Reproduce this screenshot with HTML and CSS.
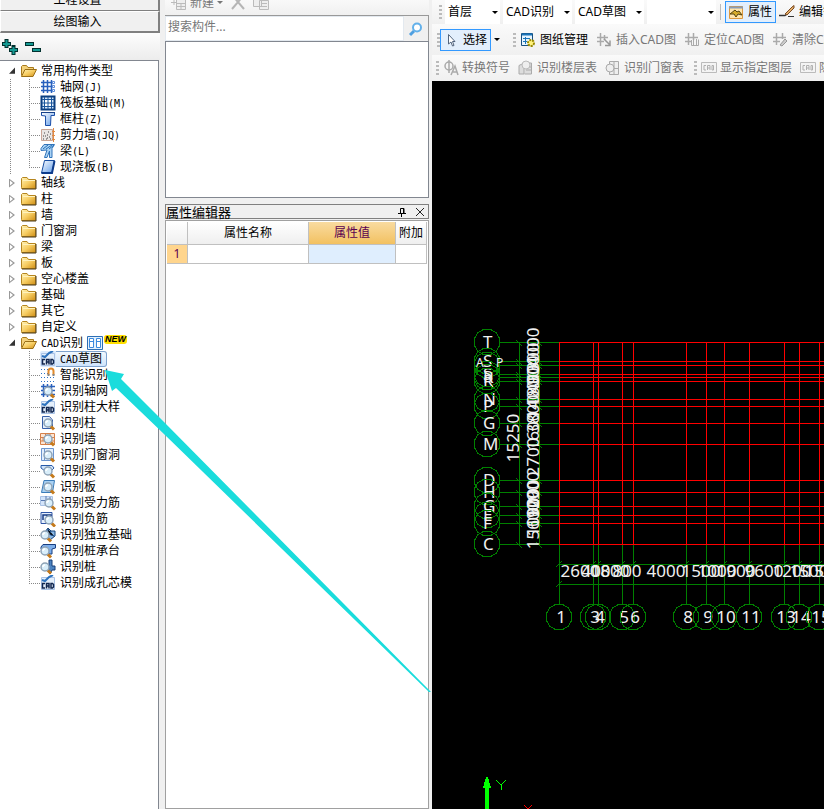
FILE: index.html
```html
<!DOCTYPE html>
<html lang="zh-CN">
<head>
  <meta charset="UTF-8">
  <meta name="viewport" content="width=device-width, initial-scale=1">
  <title>CAD草图</title>
  <link rel="stylesheet" href="styles.css">
</head>
<body>

<!-- Icon sprites -->
<svg class="sprites" aria-hidden="true">
  <defs>
    <linearGradient id="gold" x1="0" y1="0" x2="1" y2="1">
      <stop offset="0" stop-color="#fff3b8"/><stop offset=".5" stop-color="#f7cd62"/><stop offset="1" stop-color="#cf8e16"/>
    </linearGradient>
    <linearGradient id="blue" x1="0" y1="0" x2="1" y2="1">
      <stop offset="0" stop-color="#fff"/><stop offset="1" stop-color="#5f9be8"/>
    </linearGradient>
  </defs>
  <symbol id="folder" viewBox="0 0 16 16">
    <path d="M.5 12.500V3.500L1.500 2.500H6L7.500 4.500H14.500V13.500H.5Z" fill="url(#gold)" stroke="#b5851f"/>
    <path d="M1 14H15V5" fill="none" stroke="#4a3816"/>
    <path d="M2 5.500H14" stroke="#fff2bd"/>
  </symbol>
  <symbol id="folder-open" viewBox="0 0 16 16">
    <path d="M.5 12.500V3.500L1.500 2.500H5.500L7 4.500H12.500V7" fill="#f4d27b" stroke="#a87a1c"/>
    <path d="M.5 13.500L4 6.500H15.500L12 13.500Z" fill="url(#gold)" stroke="#9b6f16"/>
  </symbol>
  <symbol id="lens" viewBox="0 0 16 16">
    <path d="M10.500 11L14 14.500" stroke="#c57a1b" stroke-width="3"/>
    <circle cx="8" cy="8" r="4" fill="#d9eefa" stroke="#8fa3b6" stroke-width="1.500"/>
    <path d="M6 8Q6 6 8 6" fill="none" stroke="#fff" stroke-width="1.500"/>
  </symbol>
  <symbol id="axis" viewBox="0 0 16 16">
    <path d="M3.500 1V14M7.500 1V14M11.500 1V14M1 3.500H14M1 7.500H14M1 11.500H14" stroke="#2860bd" stroke-width="1.500"/>
    <path d="M12.500 2.500h2v2h-2zM12.500 6.500h2v2h-2zM12.500 10.500h2v2h-2z" fill="#fff" stroke="#5d8ddb"/>
  </symbol>
  <symbol id="raft" viewBox="0 0 16 16">
    <path d="M1.500 1.500h13v13h-13z" fill="#d7e8fa" stroke="#0c3f80" stroke-width="2"/>
    <path d="M4.500 4.500h7v7h-7z" fill="#fff" stroke="#1b569c"/>
    <path d="M8 2V14M2 8H14M4.500 2V5M11.500 2V5M4.500 11V14M11.500 11V14M2 4.500H5M2 11.500H5M11 4.500H14M11 11.500H14" fill="none" stroke="#1b569c"/>
  </symbol>
  <symbol id="column" viewBox="0 0 16 16">
    <path d="M1.500 1.500H14.500V4.500H11L10.500 14.500H5.500V5L1.500 4.500Z" fill="url(#blue)" stroke="#1c4fa8"/>
    <path d="M1 1.500H15" stroke="#174187"/>
  </symbol>
  <symbol id="shear" viewBox="0 0 16 16">
    <path d="M1.500 2.500h11v11h-11z" fill="#e9e6e4" stroke="#c9a596"/>
    <path d="M3 12h1M5 9h1M4 6h1M8 5h1M7 8h1M9 10h1M6 12h1M10 7h1M10 12h1M3 9h1M7 11h1" stroke="#444"/>
    <path d="M13.500 1V15M12 4.500H15M12 8.500H15M12 12.500H15" stroke="#e28b43"/>
  </symbol>
  <symbol id="beam" viewBox="0 0 16 16">
    <path d="M1 5.500L4 1.500H14.500L12 5.500V14.500H9.500V8L7 14.500H4.500L7 7L1 7.500Z" fill="#a9d2f4" stroke="#3275bb"/>
    <path d="M3 6L8 2M6 6L12 2M9 6L14 2" stroke="#246fb8"/>
  </symbol>
  <symbol id="slab" viewBox="0 0 16 16">
    <path d="M4.500 1.500H14.500L12 14H1.500Z" fill="url(#blue)" stroke="#164ca0"/>
    <path d="M1.500 14H12L14.500 2" fill="none" stroke="#0d3c8c" stroke-width="2"/>
  </symbol>
  <symbol id="cad" viewBox="0 0 16 16">
    <path d="M1.500 2.500h13v12h-13z" fill="#e4effb" stroke="#a9c2e6"/>
    <path d="M2 5L5 6L9 2L13 0" fill="none" stroke="#2d72bd" stroke-width="2"/>
    <path d="M5 8.500H2.500V13H5M6.500 13.500V8.500H9V13.500M6.500 11H9M11 8.500H12.500L13.500 9.500V12L12.500 13H11Z" fill="none" stroke="#10264f" stroke-width="1.500"/>
  </symbol>
  <symbol id="smart" viewBox="0 0 16 16">
    <path d="M1 2.500H8M1 6.500H8M1 10.500H14M1 14.500H14" stroke="#2c73c9" stroke-dasharray="1 2"/>
    <path d="M8.500 8V4Q8.500 1.500 11 1.500T13.500 4V8" fill="none" stroke="#e08a2c" stroke-width="2"/>
    <path d="M7.500 8h2M12.500 8h2" stroke="#888" stroke-width="2"/>
  </symbol>
  <symbol id="r-axis" viewBox="0 0 16 16">
    <path d="M3.500 1V14M7.500 1V14M11.500 1V14M1 3.500H15M1 7.500H15M1 11.500H15" stroke="#2860bd" stroke-width="1.500"/>
    <use href="#lens"/>
  </symbol>
  <symbol id="r-column" viewBox="0 0 16 16">
    <path d="M2.500 1.500H9.500L12.500 5V13.500H2.500Z" fill="#e5effc" stroke="#3860a8"/><use href="#lens"/>
  </symbol>
  <symbol id="r-wall" viewBox="0 0 16 16">
    <path d="M.5 2.500h14v11H.5zM1 6.500H14M1 10H14M5.500 3V6M10 3V6M3 7V10M5.500 10V13" fill="#fce4d2" stroke="#d4814b"/><use href="#lens"/>
  </symbol>
  <symbol id="r-door" viewBox="0 0 16 16">
    <path d="M1.500 1.500h12v12h-12z" fill="#e2effd" stroke="#6c95ce"/><path d="M4.500 2V13" stroke="#6c95ce"/><use href="#lens"/>
  </symbol>
  <symbol id="r-beam" viewBox="0 0 16 16">
    <path d="M1 2.500H12L14 5L11 8H5L1 5Z" fill="#d0e4fb" stroke="#295ba8"/><use href="#lens"/>
  </symbol>
  <symbol id="r-slab" viewBox="0 0 16 16">
    <path d="M4 1.500H14.500L12.500 13.500H1.500Z" fill="#a9d1f3" stroke="#3b7cb9"/><use href="#lens"/>
  </symbol>
  <symbol id="r-bar" viewBox="0 0 16 16">
    <path d="M.5 1.500h12v9H.5z" fill="#d3e4fa" stroke="#a9c2e6"/><path d="M1 5.500H13M6 1V9M10 2V6" stroke="#5778b0"/><use href="#lens" x="1"/>
  </symbol>
  <symbol id="r-neg" viewBox="0 0 16 16">
    <path d="M1 1.500h11v11h-11z" fill="#e6f0fe" stroke="#2c54a5"/><path d="M3 9V4H11V8M7 4V8" fill="none" stroke="#173b85" stroke-width="1.500"/><use href="#lens" x="1" y="1"/>
  </symbol>
  <symbol id="r-base" viewBox="0 0 16 16">
    <path d="M5 5L8 1L11 4L15 4V9L10 13L3 10Z" fill="#8cb9e6" stroke="#174680"/><path d="M8 2V7L14 9M11 4L9 8" stroke="#174680"/><use href="#lens" x="-3"/>
  </symbol>
  <symbol id="r-cap" viewBox="0 0 16 16">
    <path d="M1 4L3 1.500H15.500V5L12 6V11H7V6H1Z" fill="#7daeea" stroke="#183e80"/><use href="#lens" x="-3"/>
  </symbol>
  <symbol id="r-pile" viewBox="0 0 16 16">
    <path d="M9 1H12V7H15V11H12L10 15L7 10V7H9Z" fill="#4c83c1" stroke="#173f78"/><use href="#lens" x="-3"/>
  </symbol>
  <symbol id="hash" viewBox="0 0 16 16">
    <path d="M1 5.500H12M1 9.500H8M4.500 1V14M8.500 3V8" stroke="#aaa" stroke-width="1.500"/>
    <path d="M8 7L14 13M14 8.500V13.500H9" fill="none" stroke="#999" stroke-width="1.500"/>
  </symbol>
  <symbol id="cad-gray" viewBox="0 0 16 16">
    <path d="M.5 2.500h15v10H.5z" fill="#f4f4f4" stroke="#bbb"/>
    <path d="M5 5.500H3V10H5M6.500 10V5.500H9V10M6.500 8H9M11 5.500H12.500V10H11Z" fill="none" stroke="#b0b0b0"/>
  </symbol>
</svg>

<div class="app">

  <!-- 左侧导航 -->
  <aside class="sidebar">
    <button class="stack-btn">工程设置</button>
    <button class="stack-btn">绘图输入</button>
    <div class="tree-tools">
      <button class="plain-btn" aria-label="展开">
        <svg width="18" height="16"><path d="M2 5H11M6.500 0V9M9 11H18M13.500 6V16" stroke="#02302e" stroke-width="4"/><path d="M3 5H10M6.500 1V8M10 11H17M13.500 8V15" stroke="#149a93" stroke-width="2"/></svg>
      </button>
      <button class="plain-btn" aria-label="折叠">
        <svg width="18" height="16"><path d="M1 5H10M8 11H17" stroke="#02302e" stroke-width="4"/><path d="M2 5H9M9 11H16" stroke="#149a93" stroke-width="2"/></svg>
      </button>
    </div>

    <ul class="tree">
      <li class="branch">
        <div class="node"><i class="toggle open"></i><svg class="ico"><use href="#folder-open"/></svg>常用构件类型</div>
        <ul class="sub">
          <li><svg class="ico"><use href="#axis"/></svg><span class="name">轴网<span class="key">(J)</span></span></li>
          <li><svg class="ico"><use href="#raft"/></svg><span class="name">筏板基础<span class="key">(M)</span></span></li>
          <li><svg class="ico"><use href="#column"/></svg><span class="name">框柱<span class="key">(Z)</span></span></li>
          <li><svg class="ico"><use href="#shear"/></svg><span class="name">剪力墙<span class="key">(JQ)</span></span></li>
          <li><svg class="ico"><use href="#beam"/></svg><span class="name">梁<span class="key">(L)</span></span></li>
          <li><svg class="ico"><use href="#slab"/></svg><span class="name">现浇板<span class="key">(B)</span></span></li>
        </ul>
      </li>
      <li><div class="node"><i class="toggle"></i><svg class="ico"><use href="#folder"/></svg>轴线</div></li>
      <li><div class="node"><i class="toggle"></i><svg class="ico"><use href="#folder"/></svg>柱</div></li>
      <li><div class="node"><i class="toggle"></i><svg class="ico"><use href="#folder"/></svg>墙</div></li>
      <li><div class="node"><i class="toggle"></i><svg class="ico"><use href="#folder"/></svg>门窗洞</div></li>
      <li><div class="node"><i class="toggle"></i><svg class="ico"><use href="#folder"/></svg>梁</div></li>
      <li><div class="node"><i class="toggle"></i><svg class="ico"><use href="#folder"/></svg>板</div></li>
      <li><div class="node"><i class="toggle"></i><svg class="ico"><use href="#folder"/></svg>空心楼盖</div></li>
      <li><div class="node"><i class="toggle"></i><svg class="ico"><use href="#folder"/></svg>基础</div></li>
      <li><div class="node"><i class="toggle"></i><svg class="ico"><use href="#folder"/></svg>其它</div></li>
      <li><div class="node"><i class="toggle"></i><svg class="ico"><use href="#folder"/></svg>自定义</div></li>
      <li>
        <div class="node"><i class="toggle open"></i><svg class="ico"><use href="#folder-open"/></svg><span><span class="key">CAD</span>识别</span>
          <svg class="ico" viewBox="0 0 16 16"><path d="M.5 1.500h15v13H.5z" fill="#e4f1fd" stroke="#2d6fb5"/><path d="M2.500 3.500h4v9h-4zM9.500 3.500h4v9h-4zM2 6.500h5M9 6.500h5" fill="#fff" stroke="#3b8ade"/></svg>
          <b class="new">NEW</b>
        </div>
        <ul class="sub">
          <li class="active"><svg class="ico"><use href="#cad"/></svg><span class="name"><span class="key">CAD</span>草图</span></li>
          <li><svg class="ico"><use href="#smart"/></svg><span class="name">智能识别</span></li>
          <li><svg class="ico"><use href="#r-axis"/></svg><span class="name">识别轴网</span></li>
          <li><svg class="ico"><use href="#cad"/></svg><span class="name">识别柱大样</span></li>
          <li><svg class="ico"><use href="#r-column"/></svg><span class="name">识别柱</span></li>
          <li><svg class="ico"><use href="#r-wall"/></svg><span class="name">识别墙</span></li>
          <li><svg class="ico"><use href="#r-door"/></svg><span class="name">识别门窗洞</span></li>
          <li><svg class="ico"><use href="#r-beam"/></svg><span class="name">识别梁</span></li>
          <li><svg class="ico"><use href="#r-slab"/></svg><span class="name">识别板</span></li>
          <li><svg class="ico"><use href="#r-bar"/></svg><span class="name">识别受力筋</span></li>
          <li><svg class="ico"><use href="#r-neg"/></svg><span class="name">识别负筋</span></li>
          <li><svg class="ico"><use href="#r-base"/></svg><span class="name">识别独立基础</span></li>
          <li><svg class="ico"><use href="#r-cap"/></svg><span class="name">识别桩承台</span></li>
          <li><svg class="ico"><use href="#r-pile"/></svg><span class="name">识别桩</span></li>
          <li><svg class="ico"><use href="#cad"/></svg><span class="name">识别成孔芯模</span></li>
        </ul>
      </li>
    </ul>
  </aside>

  <!-- 构件列表 + 属性编辑器 -->
  <section class="middle">
    <div class="list-tools">
      <button class="plain-btn list-new">
        <svg width="16" height="16"><path d="M5.500 4.500h9v10h-9zM5 8.500h10M5 11.500h10M10 8V14" fill="#eee" stroke="#bbb"/><path d="M0 7.500H6M3 5V10" stroke="#bbb"/></svg>
        新建<i class="caret gray"></i>
      </button>
      <button class="plain-btn" aria-label="删除"><svg width="16" height="16"><path d="M2 14L8 7L14 14M8 7L3 1M8 7L13 1" fill="none" stroke="#b5b5b5" stroke-width="2"/></svg></button>
      <button class="plain-btn" aria-label="复制"><svg width="16" height="16"><path d="M.5 2.500h8v9h-8zM6.500 5.500h9v9h-9zM8 8.500h6M8 11.500h6" fill="#eee" stroke="#bbb"/></svg></button>
    </div>
    <div class="search">
      <input type="text" placeholder="搜索构件..." aria-label="搜索构件">
      <button class="plain-btn" aria-label="搜索"><svg width="16" height="16"><path d="M2 14L6 10" stroke="#4e9fe0" stroke-width="3"/><circle cx="9" cy="6.500" r="4" fill="#fff" stroke="#62b0ea" stroke-width="2"/></svg></button>
    </div>
    <div class="list-box"></div>

    <div class="panel-title">
      <h2>属性编辑器</h2>
      <button class="plain-btn" aria-label="固定"><svg width="10" height="10"><path d="M3.500 6V1.500H7V6M6.500 1V6M1 6.500H9M4.500 6V10" fill="none" stroke="#000"/></svg></button>
      <button class="plain-btn" aria-label="关闭"><svg width="10" height="10"><path d="M1 1L9 9M9 1L1 9" stroke="#222"/></svg></button>
    </div>
    <div class="props">
      <table>
        <colgroup><col class="c-num"><col><col class="c-val"><col class="c-add"></colgroup>
        <thead>
          <tr><th></th><th>属性名称</th><th class="hot">属性值</th><th>附加</th></tr>
        </thead>
        <tbody>
          <tr><th class="num">1</th><td></td><td class="current"></td><td></td></tr>
        </tbody>
      </table>
    </div>
  </section>

  <!-- 绘图区 -->
  <main class="work">
    <div class="bar bar-top">
      <i class="grip"></i>
      <div class="combo floor"><select aria-label="楼层"><option>首层</option></select></div>
      <div class="combo"><select aria-label="类型"><option>CAD识别</option></select></div>
      <div class="combo"><select aria-label="构件"><option>CAD草图</option></select></div>
      <div class="combo"><select aria-label="名称"><option></option></select></div>
      <i class="sep"></i>
      <button class="tool on"><svg class="ico" viewBox="0 0 16 16"><path d="M1.500 2.500h13v12h-13z" fill="#ffe5ad" stroke="#dc983d"/><path d="M1 3.500H15" stroke="#8a9cb4" stroke-width="2"/><path d="M2 10L7 6L9 8L11 7L14 11L10 10L8 13L6 10Z" fill="#d7ac2b" stroke="#54430d"/></svg>属性</button>
      <button class="tool"><svg class="ico" viewBox="0 0 16 16"><path d="M0 11.500H6L9 9" fill="none" stroke="#333" stroke-width="1.500"/><path d="M6 10L13 3L15 1.500V4L8 11Z" fill="#e2ad69" stroke="#7c4c24"/><path d="M9 12.500H15" stroke="#333"/></svg>编辑钢筋</button>
    </div>
    <div class="bar bar-mid">
      <i class="grip"></i>
      <button class="tool on"><svg class="ico" viewBox="0 0 16 16"><path d="M5.500 2.500V12L8 10L9.500 14L11 13.500L9.500 9.500H12Z" fill="#fff" stroke="#53657e"/></svg>选择</button>
      <button class="drop" aria-label="更多选择"><i class="caret"></i></button>
      <i class="grip"></i>
      <button class="tool"><svg class="ico" viewBox="0 0 16 16"><path d="M1.500 1.500h11v12h-11z" fill="#e6f4ff" stroke="#164f80"/><path d="M2 2.500H12" stroke="#1b75b9" stroke-width="2"/><path d="M3 6.500H10M3 9.500H7M5.500 5V12" stroke="#1b75b9"/><circle cx="11" cy="11" r="3" fill="#fff27d" stroke="#9a8900" stroke-width="2" stroke-dasharray="2 1"/></svg>图纸管理</button>
      <button class="tool" disabled><svg class="ico"><use href="#hash"/></svg>插入CAD图</button>
      <button class="tool" disabled><svg class="ico" viewBox="0 0 16 16"><path d="M1 5.500H14M1 9.500H7M4.500 1V13M9.500 1V8" stroke="#aaa" stroke-width="1.500"/><path d="M7.500 8V13.500H14.500V7.500M9.500 7V13M12.500 7V13" fill="none" stroke="#aaa"/></svg>定位CAD图</button>
      <button class="tool" disabled><svg class="ico" viewBox="0 0 16 16"><path d="M1 5.500H14M1 9.500H8M4.500 1V13M10.500 1V7" stroke="#aaa" stroke-width="1.500"/><path d="M8 13L13 7L15 9L10 14Z" fill="#ccc" stroke="#999"/></svg>清除CAD图</button>
    </div>
    <div class="bar bar-low">
      <i class="grip"></i>
      <button class="tool" disabled><svg class="ico" viewBox="0 0 16 16"><circle cx="6" cy="6" r="4" fill="none" stroke="#aaa" stroke-width="1.500"/><path d="M6 0V13M8 15L12 6L15 15M10 12H14" fill="none" stroke="#aaa" stroke-width="1.500"/></svg>转换符号</button>
      <button class="tool" disabled><svg class="ico" viewBox="0 0 16 16"><path d="M1 5.500L6 3L6 14L1 14ZM6.500 3H13.500V14H6.500M8 7H13M8 10H13" fill="#ddd" stroke="#aaa"/><circle cx="8" cy="5" r="4" fill="#eee" stroke="#bbb"/></svg>识别楼层表</button>
      <button class="tool" disabled><svg class="ico" viewBox="0 0 16 16"><path d="M4.500 1.500h9v13h-9zM9 2V14M5 8.500h8" fill="#eee" stroke="#aaa"/><circle cx="5" cy="8" r="4" fill="#eee" stroke="#aaa"/></svg>识别门窗表</button>
      <i class="grip"></i>
      <button class="tool" disabled><svg class="ico"><use href="#cad-gray"/></svg>显示指定图层</button>
      <button class="tool" disabled><svg class="ico"><use href="#cad-gray"/></svg>隐藏指定图层</button>
    </div>
    <svg class="drawing" id="drawing"></svg>
  </main>

  <!-- 指引箭头 -->
  <svg class="pointer" aria-hidden="true">
    <polygon points="105,370 124,374 121,379 165,423 431,692 429,692 165,435 116,388 112,391"/>
  </svg>
</div>

<script src="script.js"></script>
</body>
</html>
```
FILE: styles.css
```css
* { margin: 0; padding: 0; box-sizing: border-box; }
body {
  font-family: "Noto Sans", "Noto Sans CJK SC", sans-serif;
  font-size: 12px;
  line-height: 16px;
  color: #000;
  background: #f0f0f0;
}
button, select, input {
  font: inherit;
  color: inherit;
}
button {
  border: none;
  background: none;
  white-space: nowrap;
}
ul { list-style: none; }
.sprites {
  position: absolute;
  width: 0;
  height: 0;
}
.app {
  position: relative;
  display: flex;
  height: 100vh;
  overflow: hidden;
}
.ico {
  width: 16px;
  height: 16px;
  flex: none;
}
.plain-btn {
  display: flex;
  align-items: center;
}
.caret {
  border: 3px solid transparent;
  border-top-color: #000;
  border-bottom: none;
}
.caret.gray { border-top-color: #777; }

/* Sidebar */
.sidebar {
  display: flex;
  flex-direction: column;
  flex: none;
  width: 160px;
  margin-top: -11px;
  font-family: "Liberation Sans", "Noto Sans CJK SC", sans-serif;
}
.stack-btn {
  height: 22px;
  flex: none;
  padding-right: 4px;
  background: #f0f0f0;
  border: 1px solid #fff;
  border-right: 2px solid #808080;
  border-bottom: 1px solid #808080;
}
.stack-btn + .stack-btn { border-bottom-width: 2px; }
.tree-tools {
  display: flex;
  flex: none;
  gap: 6px;
  height: 27px;
  background: linear-gradient(#fdfdfd, #ececec);
}
.tree {
  flex: 1;
  width: 159px;
  padding-top: 2px;
  background: #fff;
  border-top: 1px solid #828790;
  border-right: 1px solid #828790;
}
.branch {
  background: repeating-linear-gradient(#888 0 1px, transparent 1px 2px) 10px 16px / 1px 100% no-repeat;
}
.node {
  display: flex;
  align-items: center;
  gap: 4px;
  height: 16px;
  padding-left: 9px;
}
.toggle {
  width: 8px;
  height: 9px;
  background: #999;
  clip-path: path(evenodd, "M0 0 6 4.500 0 9ZM1 2V7L4 4.500Z");
}
.toggle.open {
  background: #333;
  clip-path: polygon(75% 10%, 75% 80%, 0 80%);
}
.key {
  font-family: "DejaVu Sans Mono", monospace;
  font-size: 10px;
}
.sub { margin-left: 29px; }
.sub li {
  display: flex;
  align-items: center;
  height: 16px;
  background: repeating-linear-gradient(#888 0 1px, transparent 1px 2px) 0 0 / 1px 100% no-repeat;
}
.sub li:last-child { background-size: 1px 8px; }
.sub li::before {
  content: "";
  width: 11px;
  height: 1px;
  background: repeating-linear-gradient(90deg, #888 0 1px, transparent 1px 2px);
}
.name {
  padding: 0 4px;
  white-space: nowrap;
}
.active .ico {
  background: #dcebfc;
  border-radius: 2px 0 0 2px;
}
.active .name {
  height: 16px;
  line-height: 14px;
  background: linear-gradient(#f2f8fe, #cfe3fb);
  border: 1px solid #7da2ce;
  border-left: none;
  border-radius: 0 3px 3px 0;
}
.new {
  align-self: flex-start;
  margin-left: -3px;
  padding: 0 1px;
  font-size: 9px;
  line-height: 9px;
  font-style: italic;
  background: #ffdf00;
  border-radius: 3px;
}

/* Component list and properties */
.middle {
  display: flex;
  flex-direction: column;
  flex: none;
  width: 272px;
  padding: 0 3px 0 5px;
}
.list-tools {
  display: flex;
  gap: 7px;
  height: 25px;
  flex: none;
  margin-top: -10px;
  padding-left: 6px;
  color: #777;
  background: linear-gradient(#fff, #f0f0f0);
}
.list-new { gap: 3px; }
.search {
  display: flex;
  flex: none;
  height: 26px;
  border-top: 1px solid #999;
  border-right: 1px solid #999;
}
.search input {
  flex: 1;
  min-width: 0;
  padding: 0 2px 3px 2px;
  background: #fff;
  border: 1px solid #e3e9ef;
}
.search input::placeholder { color: #777; }
.search .plain-btn { padding: 0 4px; }
.list-box {
  flex: none;
  height: 157px;
  background: #fff;
  border: 1px solid #828790;
}
.panel-title {
  display: flex;
  align-items: center;
  flex: none;
  gap: 8px;
  height: 15px;
  margin-top: 6px;
  padding-right: 3px;
  border: 1px solid #808080;
}
.panel-title h2 {
  flex: 1;
  font-size: 13px;
  line-height: 14px;
  font-weight: normal;
}
.props {
  flex: 1;
  margin-top: 1px;
  padding: 1px;
  background: #fff;
  border: 1px solid #a0a0a0;
}
.props table {
  width: 100%;
  table-layout: fixed;
  border-collapse: separate;
  border-spacing: 0;
}
.c-num { width: 21px; }
.c-val { width: 87px; }
.c-add { width: 31px; }
.props th, .props td {
  height: 19px;
  font-weight: normal;
  text-align: center;
  white-space: nowrap;
  border-right: 1px solid #c0c0c0;
  border-bottom: 1px solid #c0c0c0;
}
.props thead th {
  height: 23px;
  background: linear-gradient(#fff, #efefef);
}
.props thead .hot {
  color: #5a0050;
  background: linear-gradient(#f9dba0, #f2c161);
}
.props tbody .num {
  color: #5a0050;
  background: #ffd58d;
}
.props .current { background: #dfeefe; }

/* Toolbars */
.work {
  display: flex;
  flex-direction: column;
  flex: 1;
  min-width: 0;
}
.bar {
  display: flex;
  align-items: center;
  flex: none;
  overflow: hidden;
  background: linear-gradient(#fafafa, #f0f0f0);
}
.bar-top {
  gap: 3px;
  height: 24px;
  padding-left: 7px;
}
.bar-mid {
  height: 31px;
  padding-left: 5px;
}
.bar-low {
  height: 26px;
  padding-left: 4px;
}
.grip {
  flex: none;
  width: 3px;
  height: 14px;
  background: repeating-linear-gradient(#bbb 0 2px, transparent 2px 4px);
}
.sep {
  flex: none;
  width: 1px;
  height: 16px;
  margin: 0 1px;
  background: #bbb;
}
.combo {
  position: relative;
  flex: none;
  width: 69px;
  height: 24px;
}
.floor { width: 55px; }
.combo select {
  appearance: none;
  width: 100%;
  height: 100%;
  padding: 0 10px 0 3px;
  background: #fff;
  border: none;
}
.combo::after {
  content: "";
  position: absolute;
  right: 2px;
  top: 11px;
  border: 3px solid transparent;
  border-top-color: #000;
  border-bottom: none;
  pointer-events: none;
}
.tool {
  display: flex;
  align-items: center;
  flex: none;
  gap: 4px;
  height: 22px;
  padding: 0 4px;
}
.tool.on {
  padding: 0 3px 0 2px;
  background: #e3effc;
  border: 1px solid #3399ff;
}
.bar-top .tool:last-child { padding: 0; }
.tool:disabled { color: #777; }
.drop {
  display: flex;
  align-items: center;
  justify-content: center;
  flex: none;
  width: 12px;
  height: 22px;
  margin-right: 10px;
}
.bar-low .tool { gap: 3px; }
.bar-low .tool + .grip { margin-left: 6px; }

/* Drawing */
.drawing {
  flex: 1;
  width: 100%;
  min-height: 0;
  background: #000;
}
.drawing path, .drawing polygon {
  fill: none;
  shape-rendering: crispEdges;
}
.drawing .axis { stroke: #f00; }
.drawing .lead { stroke: #008000; }
.drawing .ucs { stroke: #0f0; }
.drawing .ucs-head { fill: #0f0; }
.drawing text {
  font-family: "Noto Sans", sans-serif;
  font-size: 17px;
  fill: #f0f0f0;
}
.drawing .small { font-size: 12px; }
.pointer {
  position: absolute;
  left: 0;
  top: 0;
  width: 100%;
  height: 100%;
  pointer-events: none;
}
.pointer polygon { fill: #1adcdc; }
```
FILE: script.js
```javascript
// Axis positions in drawing units
const rows = [
  [261, 'T'], [280, 'S'], [284, ''], [293, 'S'], [296, 'R'], [300, 'R'],
  [318, 'N'], [325, 'P'], [342, 'G'], [363, 'M'], [399, 'D'], [411, 'H'],
  [425, 'G'], [434, 'E'], [442, 'F'], [463, 'C']
];
const cols = [
  [127, '1'], [161, '3'], [166, '4'], [190, '5'], [201, '6'], [254, '8'],
  [274, '9'], [292, '10'], [317, '11'], [352, '13'], [367, '14'], [387, '15']
];
// Dimension texts, by centre
const rowDims = [
  [266, '4000'], [281, '1300'], [289, '900'], [298, '400'], [306, '1800'], [319, '1400'],
  [333, '3800'], [350, '1600'], [376, '2700'], [405, '900'], [418, '1200'], [427, '1900'],
  [436, '1000'], [444, '15600']
];
const colDims = [
  [148, '2600'], [164, '400'], [178, '1800'], [195, '800'], [234, '4000'], [269, '1500'],
  [285, '1000'], [304, '1900'], [332, '9600'], [360, '1200'], [377, '1500'], [392, '1500']
];

const svg = document.getElementById('drawing');
const left = 127, bottom = 463, top0 = 261;

function add(tag, attrs, text) {
  const el = document.createElementNS('http://www.w3.org/2000/svg', tag);
  for (const key in attrs) el.setAttribute(key, attrs[key]);
  if (text) el.textContent = text;
  svg.appendChild(el);
}

function bubble(cx, cy) {
  const pts = [];
  for (let i = 0; i < 12; i++) {
    const a = Math.PI * (i + 0.5) / 6;
    pts.push((cx + 13 * Math.cos(a)).toFixed(1) + ',' + (cy + 13 * Math.sin(a)).toFixed(1));
  }
  add('polygon', { class: 'lead', points: pts.join(' ') });
}

rows.forEach(([y, name]) => {
  add('path', { class: 'lead', d: `M68 ${y + 0.5}H${left}M84 ${y - 2}l6 6M104 ${y - 2}l6 6` });
  bubble(55, y);
  if (name) add('text', { x: 51, y: y + 6 }, name);
});
cols.forEach(([x, name]) => {
  add('path', { class: 'lead', d: `M${x + 0.5} ${bottom}V523M${x - 3} 486l6 -6` });
  bubble(x, 536);
  add('text', { x: x + 2, y: 542, 'text-anchor': 'middle' }, name);
});
add('path', { class: 'lead', d: `M87.5 ${top0}V${bottom}M107.5 ${top0}V${bottom}M${left} 483.5H4000M${left} 503.5H4000M124 506l6 -6` });

rows.forEach(([y]) => add('path', { class: 'axis', d: `M${left} ${y + 0.5}H4000` }));
cols.forEach(([x]) => add('path', { class: 'axis', d: `M${x + 0.5} ${top0}V${bottom}` }));

add('text', { class: 'small', x: 44, y: 286 }, 'A');
add('text', { class: 'small', x: 64, y: 286 }, 'P');
add('text', { transform: 'translate(87 357) rotate(-90)', 'text-anchor': 'middle' }, '15250');
rowDims.forEach(([y, t]) => add('text', { transform: `translate(107 ${y}) rotate(-90)`, 'text-anchor': 'middle' }, t));
colDims.forEach(([x, t]) => add('text', { x: x, y: 496, 'text-anchor': 'middle' }, t));

// UCS icon
add('polygon', { class: 'ucs-head', points: '53,728 53,707 51,707 54,696 56,696 59,707 57,707 57,728' });
add('path', { class: 'ucs', d: 'M64 699l5 5l5 -5M69 704v5' });
add('path', { class: 'axis', d: 'M92 724l8 8M100 724l-8 8' });
```
